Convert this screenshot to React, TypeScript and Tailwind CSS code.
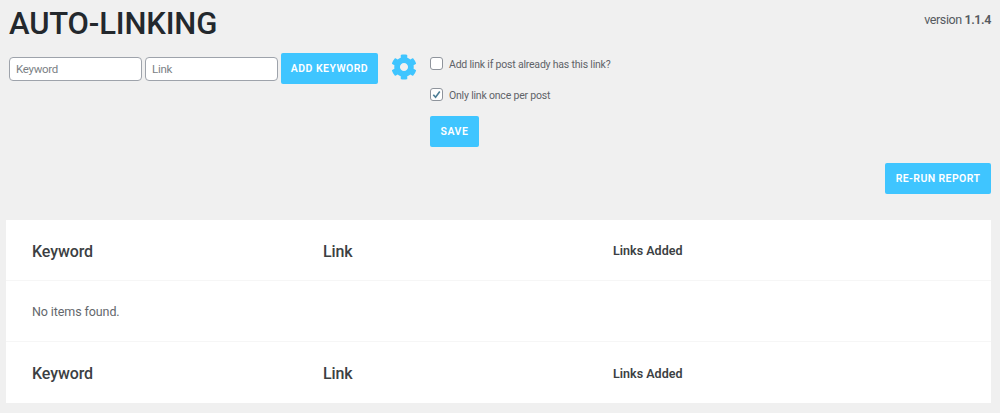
import { FaCog } from "react-icons/fa";

const font = { fontFamily: '"Roboto", "Liberation Sans", sans-serif' };

const HeaderRow = ({ bordered }: { bordered?: boolean }) => (
  <div className={`flex h-[61px] items-center pl-[26px] pt-[3px] text-[#3c3f43] ${bordered ? "border-b border-[#f6f6f6]" : ""}`}>
    <div className="w-[291px] text-[16px] font-medium tracking-[-0.1px]">Keyword</div>
    <div className="w-[290px] text-[16px] font-medium tracking-[-0.1px]">Link</div>
    <div className="text-[12.5px] font-semibold tracking-[0.02px]">Links Added</div>
  </div>
);

export default function App() {
  return (
    <div className="h-[413px] w-[1000px] overflow-hidden bg-[#f0f0f0]" style={font}>
      <div className="flex items-start justify-between pl-[9px] pr-[9px]">
        <h1 className="mt-[5px] text-[31px] font-medium leading-[37px] tracking-[-0.15px] text-[#23282d]">AUTO-LINKING</h1>
        <div className="mt-[12px] text-[12.5px] leading-[16px] tracking-[-0.4px] text-[#555a5f]">
          version <span className="font-semibold">1.1.4</span>
        </div>
      </div>

      <div className="mt-[11px] flex items-start pl-[9px]">
        <div className="flex items-center gap-[3px]">
          <input
            placeholder="Keyword"
            className="h-[24px] w-[133px] rounded-[4px] border border-[#9ea3ab] bg-white px-[6px] text-[11.5px] tracking-[-0.3px] placeholder:text-[#7b7f85]"
          />
          <input
            placeholder="Link"
            className="h-[24px] w-[133px] rounded-[4px] border border-[#9ea3ab] bg-white px-[6px] text-[11.5px] tracking-[-0.3px] placeholder:text-[#7b7f85]"
          />
          <button className="h-[31px] w-[97px] rounded-[2px] bg-[#3fc5ff] pt-[1px] text-[10.5px] font-semibold tracking-[0.45px] text-white">
            ADD KEYWORD
          </button>
        </div>
        <FaCog className="ml-[13px] mt-[1px] text-[26px] text-[#3fc5ff]" />
        <div className="ml-[13px] flex flex-col items-start">
          <label className="mt-[4px] flex h-[13px] items-center gap-[6px] text-[10.5px] tracking-[-0.2px] text-[#5f6368]">
            <span className="h-[13px] w-[13px] rounded-[3px] border border-[#8f949c] bg-white" />
            <span className="pt-[2px]">Add link if post already has this link?</span>
          </label>
          <label className="mt-[18px] flex h-[13px] items-center gap-[6px] text-[10.5px] tracking-[-0.2px] text-[#5f6368]">
            <span className="flex h-[13px] w-[13px] items-center justify-center rounded-[3px] border border-[#8f949c] bg-white">
              <svg viewBox="0 0 12 12" className="h-[11px] w-[11px]">
                <path d="M2.5 6.2 5 9l4.6-6.2" fill="none" stroke="#4e7f97" strokeWidth="1.8" />
              </svg>
            </span>
            <span className="pt-[2px]">Only link once per post</span>
          </label>
          <button className="mt-[15px] h-[31px] w-[49px] rounded-[2px] bg-[#3fc5ff] text-[10.5px] font-semibold tracking-[0.6px] text-white">
            SAVE
          </button>
        </div>
      </div>

      <div className="mt-[16px] flex justify-end pr-[9px]">
        <button className="h-[31px] w-[106px] rounded-[2px] bg-[#3fc5ff] pt-[1px] text-[10.5px] font-semibold tracking-[0.4px] text-white">
          RE-RUN REPORT
        </button>
      </div>

      <div className="ml-[6px] mr-[9px] mt-[26px] bg-white">
        <HeaderRow bordered />
        <div className="flex h-[61px] items-center border-b border-[#f6f6f6] pl-[26px] pt-[3px] text-[12.5px] tracking-[-0.1px] text-[#63676c]">
          No items found.
        </div>
        <HeaderRow />
      </div>
    </div>
  );
}
